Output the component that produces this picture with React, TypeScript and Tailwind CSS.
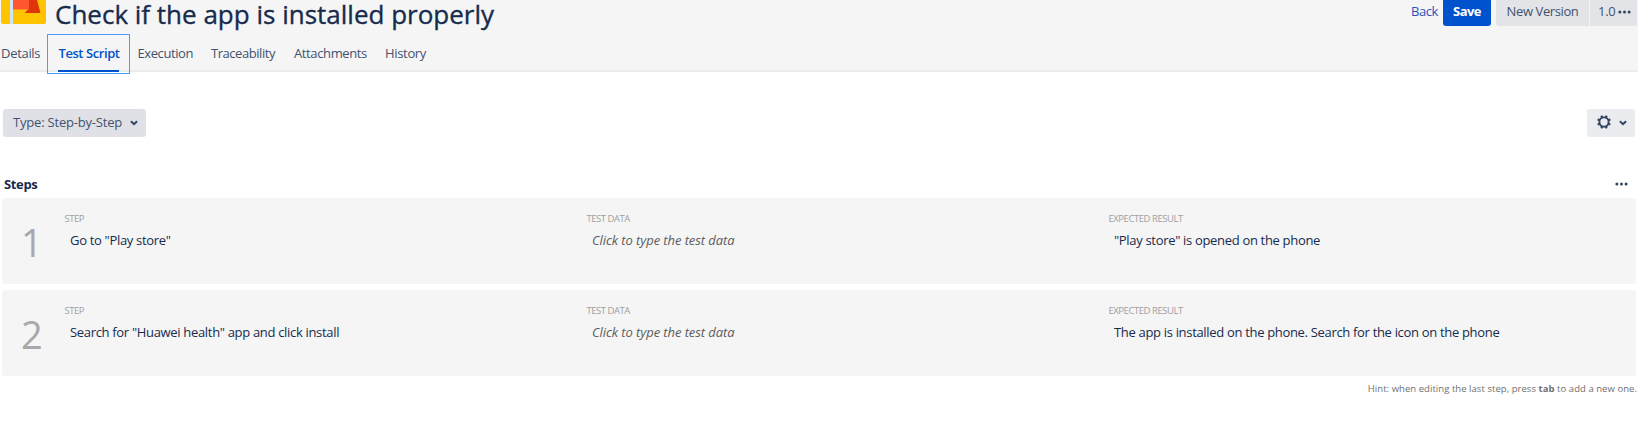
const TABS = [
  { label: "Details", box: "w-[47px] pl-[1px]", tracking: "tracking-[-0.3px]" },
  { label: "Test Script", box: "w-[83px] pl-[10px]", tracking: "tracking-[-0.43px]", active: true },
  { label: "Execution", box: "w-[73px] pl-[7.5px]", tracking: "tracking-[-0.42px]" },
  { label: "Traceability", box: "w-[83px] pl-[8px]", tracking: "tracking-[-0.45px]" },
  { label: "Attachments", box: "w-[91px] pl-[8px]", tracking: "tracking-[-0.38px]" },
  { label: "History", box: "w-[60px] pl-[8px]", tracking: "tracking-[-0.33px]" },
];

const STEPS = [
  { step: 'Go to "Play store"', result: '"Play store" is opened on the phone' },
  {
    step: 'Search for "Huawei health" app and click install',
    result: "The app is installed on the phone. Search for the icon on the phone",
  },
];

function ProjectLogo() {
  return (
    <svg className="h-6 w-[46px] shrink-0" viewBox="0 0 46 24">
      <path d="M1 0H46V22a2 2 0 0 1-2 2H3a2 2 0 0 1-2-2Z" fill="#ffc400" />
      <path d="M10 0H13V24H10Z" fill="#cce6f5" />
      <path d="M28 0H37L40.500 13H24.500L28 9.500Z" fill="#de350b" />
      <path d="M13 0H29V9.500H13Z" fill="#ff5630" />
    </svg>
  );
}

function Dots({ className }: { className: string }) {
  return (
    <svg className={className} viewBox="0 0 13 4" fill="#344563">
      <circle cx="1.900" cy="2" r="1.500" />
      <circle cx="6.500" cy="2" r="1.500" />
      <circle cx="11.100" cy="2" r="1.500" />
    </svg>
  );
}

function Chevron() {
  return (
    <svg className="h-[6px] w-[8px]" viewBox="0 0 8 6" fill="none" stroke="#344563" strokeWidth="2">
      <path d="M.9 1.200 4 4.200 7.100 1.200" />
    </svg>
  );
}

function Gear() {
  const teeth = [22.5, 67.5, 112.5, 157.5, 202.5, 247.5, 292.5, 337.5];
  return (
    <svg className="h-[14px] w-[14px]" viewBox="-7 -7 14 14" fill="#344563">
      <circle r="4.600" fill="none" stroke="#344563" strokeWidth="1.900" />
      {teeth.map((a) => (
        <path key={a} d="M-1.400 -4.500 -1 -6.900H1L1.400 -4.500Z" transform={`rotate(${a})`} />
      ))}
    </svg>
  );
}

function Field({ label, children, muted }: { label: string; children: string; muted?: boolean }) {
  return (
    <div className="w-[522px] shrink-0 pt-[14px] whitespace-nowrap last:w-auto">
      <div className="h-[13px] pl-[0.5px] text-[9.5px] leading-[13px] tracking-[-0.46px] text-[#a0a0a0]">{label}</div>
      <div
        className={
          muted
            ? "mt-[6px] pl-[6px] leading-[18px] tracking-[-0.08px] text-[#5c5c5c] italic"
            : "mt-[6px] pl-[6px] leading-[18px] tracking-[-0.32px] text-[#172b4d]"
        }
      >
        {children}
      </div>
    </div>
  );
}

export default function App() {
  return (
    <div className="h-[428px] overflow-hidden bg-white font-['Open_Sans',sans-serif] text-[13px] text-[#42526e]">
      <header className="flex h-[72px] flex-col border-b-2 border-[#ebecf0] bg-[#f5f5f5]">
        <div className="flex h-[34px] shrink-0 items-start pr-px">
          <ProjectLogo />
          <h1 className="pl-[9px] text-[26px] leading-[28px] font-medium whitespace-nowrap text-[#172b4d] [-webkit-text-stroke:0.35px_#172b4d]">
            Check if the app is installed properly
          </h1>
          <div className="ml-auto flex h-[26px] items-stretch leading-[23px] whitespace-nowrap">
            <a className="mr-[5px] tracking-[-0.45px] text-[#2a50c0]">Back</a>
            <button className="mr-[5px] w-12 rounded-b-[3px] bg-[#0052cc] pb-[3px] font-bold tracking-[-0.55px] text-white">
              Save
            </button>
            <button className="mr-px w-[93px] rounded-bl-[3px] bg-[#e2e4e8] pb-[3px] tracking-[-0.4px]">
              New Version
            </button>
            <button className="flex w-[47px] items-start bg-[#e2e4e8] pl-[8px] tracking-[-0.3px]">
              1.0
              <Dots className="mt-[10px] ml-[3px] h-[4px] w-[13px]" />
            </button>
          </div>
        </div>
        <nav className="flex h-10 shrink-0 whitespace-nowrap">
          {TABS.map((t) =>
            t.active ? (
              <div key={t.label} className={`${t.box} border border-[#4c9aff]`}>
                <div className={`${t.tracking} h-[37px] w-[61px] border-b-2 border-[#0052cc] pl-[0.5px] leading-[37px] font-semibold text-[#0052cc]`}>
                  {t.label}
                </div>
              </div>
            ) : (
              <div key={t.label} className={`${t.box} ${t.tracking} leading-[39px]`}>
                {t.label}
              </div>
            ),
          )}
        </nav>
      </header>

      <div className="mt-[37px] flex h-7 justify-between pr-[3px] pl-[3px]">
        <button className="flex w-[143px] items-center rounded-[3px] bg-[#dfe1e6] pl-[10px] tracking-[-0.2px] whitespace-nowrap">
          <span className="w-[117px] text-left">Type: Step-by-Step</span>
          <Chevron />
        </button>
        <button className="flex w-12 items-center rounded-[3px] bg-[#ebecf0] pl-[10px]">
          <span className="-mt-[3px] mr-[8px]">
            <Gear />
          </span>
          <Chevron />
        </button>
      </div>

      <div className="mt-[37px] flex h-[24px] justify-between pr-[10px] pl-[4px]">
        <h2 className="leading-[20px] font-bold tracking-[-0.35px] text-[#172b4d]">Steps</h2>
        <Dots className="mt-[8px] h-[4px] w-[13px]" />
      </div>

      <main className="flex flex-col gap-[6px] pr-[2px] pl-[2px]">
        {STEPS.map((s, i) => (
          <section key={s.step} className="flex h-[86px] rounded-[3px] bg-[#f5f5f5]">
            <div className="w-[62px] shrink-0 pt-[19px] pl-[19px] text-[38px] leading-[50px] text-[#a9a9a9]">
              {i + 1}
            </div>
            <Field label="STEP">{s.step}</Field>
            <Field label="TEST DATA" muted>
              Click to type the test data
            </Field>
            <Field label="EXPECTED RESULT">{s.result}</Field>
          </section>
        ))}
      </main>

      <p className="mt-[5px] pr-px text-right text-[9.5px] leading-[16px] tracking-[0.05px] text-[#707070]">
        Hint: when editing the last step, press <b>tab</b> to add a new one.
      </p>
    </div>
  );
}
